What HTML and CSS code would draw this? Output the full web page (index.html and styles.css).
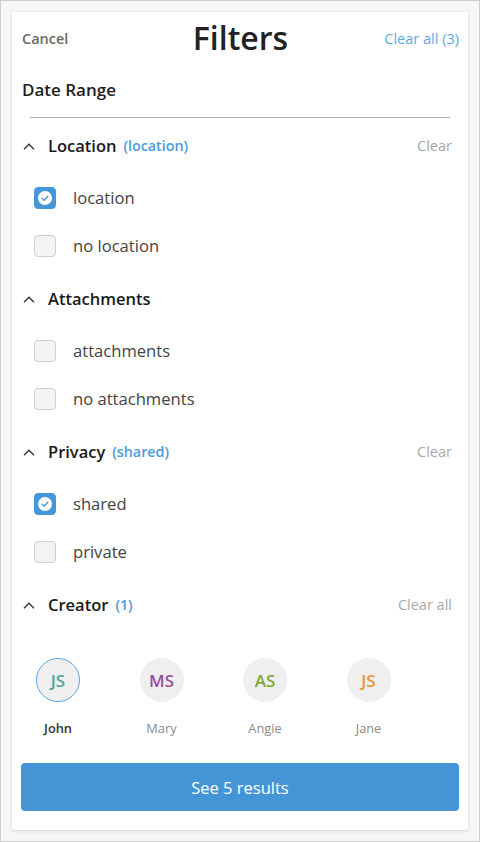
FILE: index.html
```html
<!DOCTYPE html>
<html>
<head>
<meta charset="utf-8">
<link rel="stylesheet" href="styles.css">
</head>
<body>
<div class="frame">
  <div class="card">
    <div class="topbar">
      <span class="cancel">Cancel</span>
      <span class="title">Filters</span>
      <span class="clear-all">Clear all (3)</span>
    </div>
    <div class="date-range">Date Range</div>
    <div class="divider"></div>

    <div class="section">
      <div class="sec-head">
        <svg class="chev" width="12" height="7" viewBox="0 0 12 7"><polyline points="1,6.2 6,1.2 11,6.2" fill="none" stroke="#333" stroke-width="1.3"/></svg>
        <span class="sec-title">Location</span>
        <span class="sec-tag">(location)</span>
        <span class="sec-clear">Clear</span>
      </div>
      <div class="options">
        <div class="opt"><span class="box checked"><svg width="14" height="14" viewBox="0 0 14 14"><circle cx="7" cy="7" r="7" fill="#fff"/><polyline points="4.2,7.3 6.2,9.2 9.8,5.2" fill="none" stroke="#4697da" stroke-width="1.4" stroke-linecap="round" stroke-linejoin="round"/></svg></span><span class="opt-label">location</span></div>
        <div class="opt"><span class="box"></span><span class="opt-label">no location</span></div>
      </div>
    </div>

    <div class="section">
      <div class="sec-head">
        <svg class="chev" width="12" height="7" viewBox="0 0 12 7"><polyline points="1,6.2 6,1.2 11,6.2" fill="none" stroke="#333" stroke-width="1.3"/></svg>
        <span class="sec-title">Attachments</span>
      </div>
      <div class="options">
        <div class="opt"><span class="box"></span><span class="opt-label">attachments</span></div>
        <div class="opt"><span class="box"></span><span class="opt-label">no attachments</span></div>
      </div>
    </div>

    <div class="section">
      <div class="sec-head">
        <svg class="chev" width="12" height="7" viewBox="0 0 12 7"><polyline points="1,6.2 6,1.2 11,6.2" fill="none" stroke="#333" stroke-width="1.3"/></svg>
        <span class="sec-title">Privacy</span>
        <span class="sec-tag">(shared)</span>
        <span class="sec-clear">Clear</span>
      </div>
      <div class="options">
        <div class="opt"><span class="box checked"><svg width="14" height="14" viewBox="0 0 14 14"><circle cx="7" cy="7" r="7" fill="#fff"/><polyline points="4.2,7.3 6.2,9.2 9.8,5.2" fill="none" stroke="#4697da" stroke-width="1.4" stroke-linecap="round" stroke-linejoin="round"/></svg></span><span class="opt-label">shared</span></div>
        <div class="opt"><span class="box"></span><span class="opt-label">private</span></div>
      </div>
    </div>

    <div class="section last">
      <div class="sec-head">
        <svg class="chev" width="12" height="7" viewBox="0 0 12 7"><polyline points="1,6.2 6,1.2 11,6.2" fill="none" stroke="#333" stroke-width="1.3"/></svg>
        <span class="sec-title">Creator</span>
        <span class="sec-tag">(1)</span>
        <span class="sec-clear">Clear all</span>
      </div>
      <div class="people">
        <div class="person selected">
          <div class="avatar c-teal">JS</div>
          <div class="name">John</div>
        </div>
        <div class="person">
          <div class="avatar c-purple">MS</div>
          <div class="name">Mary</div>
        </div>
        <div class="person">
          <div class="avatar c-green">AS</div>
          <div class="name">Angie</div>
        </div>
        <div class="person">
          <div class="avatar c-orange">JS</div>
          <div class="name">Jane</div>
        </div>
      </div>
    </div>

    <div class="results">See 5 results</div>
  </div>
</div>
</body>
</html>
```

FILE: styles.css
```css
* { box-sizing: border-box; }
html, body { margin: 0; padding: 0; }
body {
  font-family: "Open Sans", "Lato", sans-serif;
  color: #222;
}
.frame {
  width: 480px;
  height: 842px;
  border: 1px solid #cdcdcd;
  background: #f6f6f6;
  padding: 11px;
}
.card {
  height: 818px;
  background: #fff;
  box-shadow: 0 1px 3px rgba(0,0,0,0.14);
  padding: 0 9px;
  display: flex;
  flex-direction: column;
}
.topbar {
  height: 52px;
  display: flex;
  align-items: center;
  justify-content: space-between;
  padding: 0 0 0 1px;
}
.cancel {
  font-size: 14.5px;
  font-weight: 600;
  color: #6a6a6a;
  width: 110px;
}
.title {
  font-size: 32px;
  font-weight: 600;
  color: #222;
  margin-top: -2px;
}
.clear-all {
  font-size: 14.5px;
  color: #5aa9e1;
  width: 110px;
  text-align: right;
}
.date-range {
  height: 50px;
  display: flex;
  align-items: center;
  padding-left: 1px;
  font-size: 17px;
  font-weight: 600;
  color: #1e1e1e;
}
.divider {
  height: 1px;
  background: #b0b0b0;
  margin: 3px 9px 4px 9px;
}
.section { padding-bottom: 5px; }
.section.last { padding-bottom: 0; }
.sec-head {
  height: 48px;
  display: flex;
  align-items: center;
  padding-left: 2px;
  padding-right: 7px;
}
.chev { margin-right: 13px; flex: none; }
.sec-title {
  font-size: 16.5px;
  font-weight: 600;
  color: #1a1a1a;
  margin-top: -2px;
}
.sec-tag {
  font-size: 14.3px;
  font-weight: 600;
  color: #4a9bd9;
  margin-left: 7px;
  margin-top: -2px;
}
.sec-clear {
  margin-left: auto;
  font-size: 14.5px;
  color: #a8a8a8;
  margin-top: -2px;
}
.options { padding-top: 4px; }
.opt {
  height: 48px;
  display: flex;
  align-items: center;
  padding-left: 13px;
}
.box {
  width: 22px;
  height: 22px;
  border-radius: 4px;
  border: 1px solid #cfcfcf;
  background: #f3f3f3;
  margin-right: 17px;
  flex: none;
  display: flex;
  align-items: center;
  justify-content: center;
}
.box.checked {
  background: #4697da;
  border-color: #4697da;
}
.opt-label {
  font-size: 16.6px;
  color: #444;
  margin-top: -1px;
}
.people {
  display: flex;
  gap: 29.5px;
  padding-top: 29px;
}
.person {
  width: 74px;
  display: flex;
  flex-direction: column;
  align-items: center;
}
.avatar {
  width: 44px;
  height: 44px;
  border-radius: 50%;
  background: #efefef;
  display: flex;
  align-items: center;
  justify-content: center;
  font-size: 17px;
  font-weight: 600;
}
.person.selected .avatar {
  border: 1.5px solid #5aa9e1;
}
.c-teal { color: #4ea594; }
.c-purple { color: #9a4b9f; }
.c-green { color: #7aaa35; }
.c-orange { color: #e8963a; }
.name {
  margin-top: 17px;
  height: 18px;
  line-height: 18px;
  font-size: 12.8px;
  color: #8a8a8a;
}
.person.selected .name {
  color: #333;
  font-weight: 600;
}
.results {
  margin-top: 26px;
  height: 48px;
  border-radius: 4px;
  background: #4595d6;
  color: #fff;
  font-size: 16.5px;
  display: flex;
  align-items: center;
  justify-content: center;
}
```
